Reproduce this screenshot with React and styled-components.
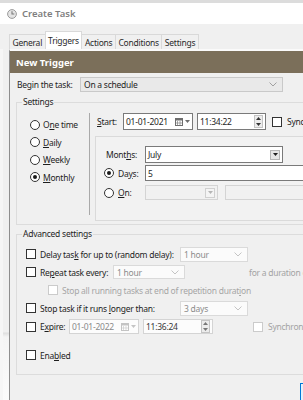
import React from "react";
import styled, { createGlobalStyle } from "styled-components";

const GlobalStyle = createGlobalStyle`
  html, body { margin: 0; padding: 0; background: #fff; }
  body { font-family: "Noto Sans", "Open Sans", sans-serif; }
  * { box-sizing: border-box; }
`;

const Screen = styled.div`
  width: 303px;
  height: 400px;
  overflow: hidden;
  display: flex;
  flex-direction: column;
  font-size: 8.5px;
  letter-spacing: -0.25px;
  color: #1e1e1e;
  background: #fff;
`;

const TopEdge = styled.div`
  flex: none;
  height: 3px;
  background: #dcdcdc;
`;

const TitleBar = styled.div`
  flex: none;
  height: 21px;
  display: flex;
  align-items: center;
  gap: 5px;
  padding-left: 7px;
  font-size: 9.5px;
  font-weight: 600;
  letter-spacing: 0;
  color: #7f7f7f;
  background: #fff;
`;

const TabStrip = styled.div`
  flex: none;
  height: 25px;
  display: flex;
  align-items: flex-end;
  padding-left: 10px;
  background: #f0f0f0;
`;

const Tab = styled.div`
  height: ${({ active }) => (active ? "18px" : "15px")};
  margin-left: -1px;
  padding: 0 2.5px;
  display: flex;
  align-items: center;
  border: 1px solid #d9d9d9;
  border-bottom: none;
  background: ${({ active }) => (active ? "#fff" : "#f0f0f0")};
  color: #2a2a2a;
  white-space: nowrap;
  position: relative;
  z-index: ${({ active }) => (active ? 1 : 0)};
`;

const Lower = styled.div`
  flex: 1;
  display: flex;
  min-height: 0;
`;

const Gutter = styled.div`
  flex: none;
  width: 9px;
  background: linear-gradient(
    to bottom,
    #f0f0f0 0,
    #f0f0f0 283px,
    #dedede 284px,
    #f4f4f4 288px,
    #fbfbfb 100%
  );
  box-shadow: inset 3px 0 0 #f6f6f6;
`;

const Dialog = styled.div`
  flex: 1;
  display: flex;
  flex-direction: column;
  border-left: 1px solid #8e8e8e;
  border-top: 2px solid #fafafa;
  background: #f0f0f0;
  min-width: 0;
`;

const Header = styled.div`
  flex: none;
  height: 22px;
  display: flex;
  align-items: center;
  padding-left: 6px;
  background: #7b6f5a;
  color: #fff;
  font-size: 9.5px;
  font-weight: 700;
  letter-spacing: 0;
`;

const Body = styled.div`
  padding: 4px 0 0 6px;
  white-space: nowrap;
`;

const BeginRow = styled.div`
  display: flex;
  align-items: center;
  height: 15px;
  padding-left: 1px;
`;

const Label = styled.span`
  flex: none;
  width: ${({ w }) => (w ? `${w}px` : "auto")};
  color: ${({ disabled }) => (disabled ? "#a3a3a3" : "#1e1e1e")};
`;

const Combo = styled.div`
  flex: none;
  width: ${({ w }) => w}px;
  height: ${({ h }) => h || 15}px;
  display: flex;
  align-items: center;
  justify-content: space-between;
  padding: 0 5px 0 3px;
  border: 1px solid ${({ disabled }) => (disabled ? "#dadada" : "#c9c9c9")};
  background: ${({ disabled }) => (disabled ? "#fbfbfb" : "#e9e9e9")};
  color: ${({ disabled }) => (disabled ? "#8c8c8c" : "#1e1e1e")};
`;

const GroupBox = styled.fieldset`
  margin: ${({ mt }) => mt}px 0 0 0;
  padding: 0 0 ${({ pb }) => pb}px 0;
  width: 420px;
  border: 1px solid #dcdcdc;
  min-inline-size: auto;
`;

const Legend = styled.legend`
  margin-left: 5px;
  padding: 0 1px;
  line-height: 12px;
  color: #1e1e1e;
`;

const SettingsRow = styled.div`
  display: flex;
  margin-top: 5px;
`;

const RadioColumn = styled.div`
  flex: none;
  width: 73px;
  height: 102px;
  padding: 3px 0 0 13px;
  border-right: 1px solid #a9a9a9;
  display: flex;
  flex-direction: column;
`;

const RadioRow = styled.div`
  height: 17.5px;
  display: flex;
  align-items: center;
  gap: 3px;
`;

const Radio = styled.span`
  flex: none;
  width: 10px;
  height: 10px;
  border-radius: 50%;
  border: 1px solid #333;
  background: #fff;
  display: flex;
  align-items: center;
  justify-content: center;
  &::after {
    content: "";
    width: 4px;
    height: 4px;
    border-radius: 50%;
    background: ${({ checked }) => (checked ? "#1a1a1a" : "transparent")};
  }
`;

const Check = styled.span`
  flex: none;
  width: 10px;
  height: 10px;
  border: 1px solid ${({ disabled }) => (disabled ? "#cbcbcb" : "#333")};
  background: #fff;
`;

const RightColumn = styled.div`
  flex: 1;
  padding-left: 5px;
`;

const StartRow = styled.div`
  height: 17px;
  display: flex;
  align-items: center;
  padding-left: 2px;
`;

const Field = styled.div`
  flex: none;
  width: ${({ w }) => w}px;
  height: ${({ h }) => h || 17}px;
  margin-left: ${({ ml }) => ml || 0}px;
  display: flex;
  align-items: center;
  justify-content: space-between;
  padding: 0 2px 0 2px;
  border: 1px solid ${({ disabled }) => (disabled ? "#d4d4d4" : "#7a7a7a")};
  background: ${({ disabled }) => (disabled ? "#fcfcfc" : "#fff")};
  color: ${({ disabled }) => (disabled ? "#8a8a8a" : "#1e1e1e")};
`;

const Spin = styled.span`
  width: 9px;
  height: 13px;
  display: flex;
  flex-direction: column;
  justify-content: space-around;
  align-items: center;
  border: 1px solid #c4c4c4;
  background: #ececec;
`;

const DropButton = styled.span`
  width: 10px;
  height: 10px;
  display: flex;
  align-items: center;
  justify-content: center;
  border: 1px solid ${({ disabled }) => (disabled ? "#d0d0d0" : "#b5b5b5")};
  background: ${({ disabled }) => (disabled ? "#f4f4f4" : "#e6e6e6")};
`;

const Trailing = styled.span`
  margin-left: ${({ ml }) => ml}px;
  display: flex;
  align-items: center;
  gap: 5px;
  color: ${({ disabled }) => (disabled ? "#a3a3a3" : "#1e1e1e")};
`;

const MonthlyBox = styled.div`
  margin-top: 6px;
  width: 260px;
  height: 85px;
  padding: 9px 0 0 8px;
  border: 1px solid #dadada;
  background: #f2f2f2;
`;

const BoxRow = styled.div`
  height: ${({ h }) => h}px;
  margin-top: ${({ mt }) => mt || 0}px;
  display: flex;
  align-items: center;
`;

const LabelCell = styled.div`
  flex: none;
  width: 41px;
  display: flex;
  align-items: center;
  gap: 4px;
  justify-content: ${({ right }) => (right ? "flex-end" : "flex-start")};
  padding-right: ${({ right }) => (right ? "8px" : "0")};
`;

const AdvancedRows = styled.div`
  padding: 5px 0 0 9px;
`;

const OptionRow = styled.div`
  height: ${({ h }) => h || 18}px;
  margin-top: ${({ mt }) => mt || 0}px;
  padding-left: ${({ indent }) => indent || 0}px;
  display: flex;
  align-items: center;
`;

const OptionText = styled.span`
  flex: none;
  width: ${({ w }) => (w ? `${w}px` : "auto")};
  margin-left: 4px;
  color: ${({ disabled }) => (disabled ? "#a6a6a6" : "#1e1e1e")};
`;

const Footer = styled.div`
  padding: 8px 0 0 284px;
`;

const OkButton = styled.div`
  width: 60px;
  height: 20px;
  border: 1px solid #0078d7;
  background: #e5f1fb;
`;

const Chevron = ({ color = "#a0a0a0" }) => (
  <svg width="8" height="5" viewBox="0 0 8 5">
    <path d="M0.5 0.5 L4 4 L7.5 0.5" fill="none" stroke={color} strokeWidth="1" />
  </svg>
);

const Tri = ({ up, color = "#1e1e1e" }) => (
  <svg width="5" height="3" viewBox="0 0 5 3">
    <path d={up ? "M0 3 L2.5 0 L5 3 Z" : "M0 0 L5 0 L2.5 3 Z"} fill={color} />
  </svg>
);

const Calendar = ({ color = "#7a7a7a" }) => (
  <span style={{ display: "flex", alignItems: "center", gap: 2 }}>
    <svg width="8" height="8" viewBox="0 0 8 8">
      <rect x="0.5" y="0.5" width="7" height="7" fill="#fff" stroke={color} />
      <rect x="0.5" y="0.5" width="7" height="2" fill={color} />
      <path d="M2.5 3 V7.5 M5 3 V7.5 M0.5 5 H7.5" stroke={color} strokeWidth="0.6" />
    </svg>
    <Tri color={color} />
  </span>
);

const Clock = () => (
  <svg width="10" height="10" viewBox="0 0 10 10">
    <circle cx="5" cy="5" r="4.4" fill="#e4e4e4" stroke="#9a9a9a" strokeWidth="1" />
    <path d="M5 2.2 V5 H7.3" fill="none" stroke="#7a7a7a" strokeWidth="1.1" />
  </svg>
);

const DateField = ({ value, disabled, ml }) => (
  <Field w={70} ml={ml} disabled={disabled} h={disabled ? 15 : 17}>
    <span>{value}</span>
    <Calendar color={disabled ? "#c4c4c4" : "#6e6e6e"} />
  </Field>
);

const TimeField = ({ value, disabled, w, ml }) => (
  <Field w={w} ml={ml} disabled={disabled} h={disabled ? 15 : 17}>
    <span style={{ color: disabled ? "#3a3a3a" : undefined }}>{value}</span>
    <Spin>
      <Tri up color={disabled ? "#777" : "#333"} />
      <Tri color={disabled ? "#777" : "#333"} />
    </Spin>
  </Field>
);

const tabs = ["General", "Triggers", "Actions", "Conditions", "Settings"];
const schedules = [
  { pre: "O", key: "n", post: "e time" },
  { pre: "", key: "D", post: "aily" },
  { pre: "", key: "W", post: "eekly" },
  { pre: "", key: "M", post: "onthly", checked: true },
];

export default function App() {
  return (
    <>
      <GlobalStyle />
      <Screen>
        <TopEdge />
        <TitleBar>
          <Clock />
          Create Task
        </TitleBar>
        <TabStrip>
          {tabs.map((t) => (
            <Tab key={t} active={t === "Triggers"}>
              {t}
            </Tab>
          ))}
        </TabStrip>
        <Lower>
          <Gutter />
          <Dialog>
            <Header>New Trigger</Header>
            <Body>
              <BeginRow>
                <Label w={63}>Begin the task:</Label>
                <Combo w={203}>
                  <span>On a schedule</span>
                  <Chevron />
                </Combo>
              </BeginRow>

              <GroupBox mt={4} pb={3}>
                <Legend>Settings</Legend>
                <SettingsRow>
                  <RadioColumn>
                    {schedules.map((s) => (
                      <RadioRow key={s.post}>
                        <Radio checked={s.checked} />
                        <span>
                          {s.pre}
                          <u>{s.key}</u>
                          {s.post}
                        </span>
                      </RadioRow>
                    ))}
                  </RadioColumn>
                  <RightColumn>
                    <StartRow>
                      <Label w={26}>
                        <u>S</u>tart:
                      </Label>
                      <DateField value="01-01-2021" />
                      <TimeField value="11:34:22" w={69} ml={4} />
                      <Trailing ml={6}>
                        <Check />
                        Synchronize across time zones
                      </Trailing>
                    </StartRow>
                    <MonthlyBox>
                      <BoxRow h={17}>
                        <LabelCell right>
                          <span>
                            Mont<u>h</u>s:
                          </span>
                        </LabelCell>
                        <Field w={138}>
                          <span>July</span>
                          <DropButton>
                            <Tri />
                          </DropButton>
                        </Field>
                      </BoxRow>
                      <BoxRow h={16} mt={2}>
                        <LabelCell>
                          <Radio checked />
                          <span>
                            Da<u>y</u>s:
                          </span>
                        </LabelCell>
                        <Field w={170} h={16}>
                          <span>5</span>
                        </Field>
                      </BoxRow>
                      <BoxRow h={15} mt={4}>
                        <LabelCell>
                          <Radio />
                          <span>
                            <u>O</u>n:
                          </span>
                        </LabelCell>
                        <Field w={73} h={15} disabled style={{ background: "#f1f1f1" }}>
                          <span />
                          <DropButton disabled>
                            <Tri color="#b5b5b5" />
                          </DropButton>
                        </Field>
                        <Field w={100} h={15} ml={7} disabled style={{ background: "#f1f1f1" }} />
                      </BoxRow>
                    </MonthlyBox>
                  </RightColumn>
                </SettingsRow>
              </GroupBox>

              <GroupBox mt={3} pb={10}>
                <Legend>Advanced settings</Legend>
                <AdvancedRows>
                  <OptionRow>
                    <Check />
                    <OptionText w={140}>
                      Delay tas<u>k</u> for up to (random delay):
                    </OptionText>
                    <Combo w={68} disabled>
                      <span>1 hour</span>
                      <Chevron color="#c4c4c4" />
                    </Combo>
                  </OptionRow>
                  <OptionRow>
                    <Check />
                    <OptionText w={73}>
                      Re<u>p</u>eat task every:
                    </OptionText>
                    <Combo w={72} h={14} disabled>
                      <span>1 hour</span>
                      <Chevron color="#c4c4c4" />
                    </Combo>
                    <Trailing ml={64} disabled>
                      for a duration of:
                    </Trailing>
                  </OptionRow>
                  <OptionRow indent={22}>
                    <Check disabled />
                    <OptionText disabled>
                      Stop all running tasks at end of repetition durat<u>i</u>on
                    </OptionText>
                  </OptionRow>
                  <OptionRow>
                    <Check />
                    <OptionText w={140}>
                      Stop task if it runs <u>l</u>onger than:
                    </OptionText>
                    <Combo w={68} disabled>
                      <span>3 days</span>
                      <Chevron color="#c4c4c4" />
                    </Combo>
                  </OptionRow>
                  <OptionRow h={19}>
                    <Check />
                    <OptionText w={29}>
                      E<u>x</u>pire:
                    </OptionText>
                    <DateField value="01-01-2022" disabled />
                    <TimeField value="11:36:24" w={70} ml={4} disabled />
                    <Trailing ml={40} disabled>
                      <Check disabled />
                      Synchronize across time zones
                    </Trailing>
                  </OptionRow>
                  <OptionRow mt={10}>
                    <Check />
                    <OptionText>
                      Ena<u>b</u>led
                    </OptionText>
                  </OptionRow>
                </AdvancedRows>
              </GroupBox>
              <Footer>
                <OkButton />
              </Footer>
            </Body>
          </Dialog>
        </Lower>
      </Screen>
    </>
  );
}
